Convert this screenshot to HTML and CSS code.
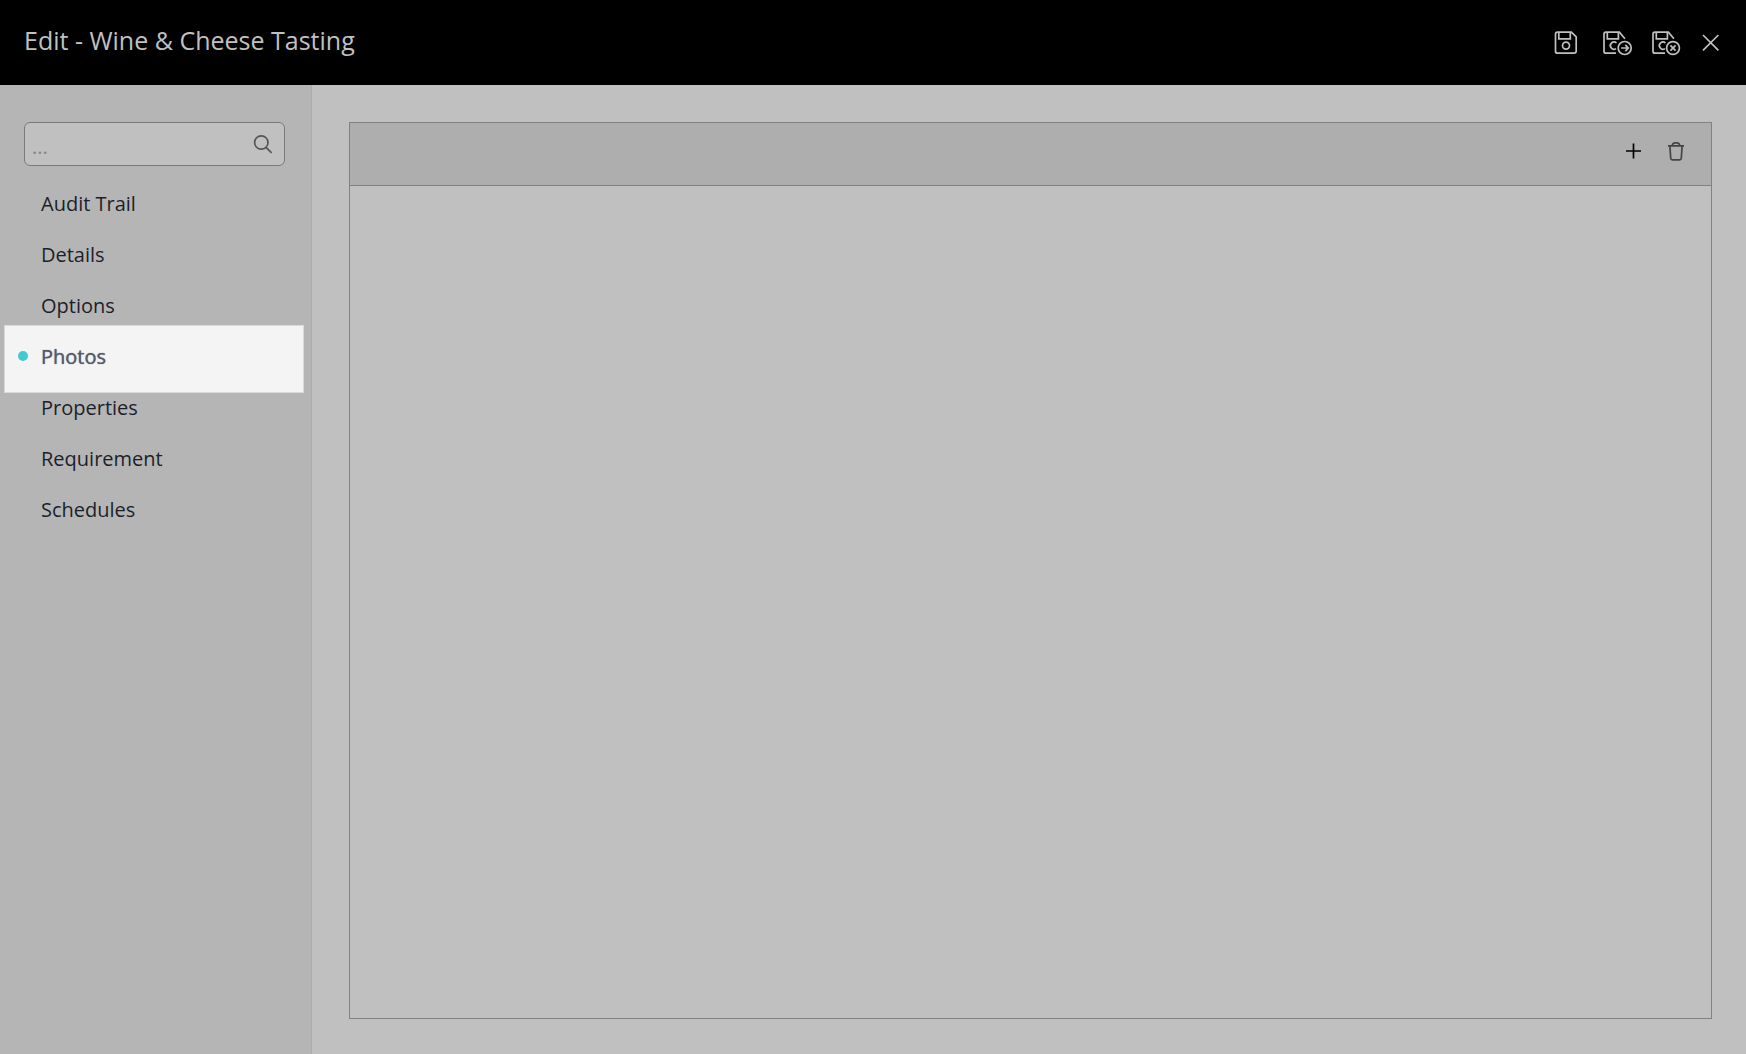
FILE: index.html
```html
<!DOCTYPE html>
<html lang="en">
<head>
<meta charset="utf-8">
<title>Edit - Wine &amp; Cheese Tasting</title>
<link rel="stylesheet" href="styles.css">
</head>
<body>
<header class="topbar">
  <h1 class="title">Edit - Wine &amp; Cheese Tasting</h1>
  <div class="actions">
    <button class="icon-btn" type="button" aria-label="Save">
      <svg width="30" height="26" viewBox="0 0 30 26"><path d="M3.5 2.2H17.4L22.2 6.8V21Q22.2 23.2 20 23.2H3.5Q1.5 23.2 1.5 21.2V4.2Q1.5 2.2 3.5 2.2Z"/><path d="M4.8 2.4V8.8H16.3V2.4"/><circle cx="12" cy="15.6" r="3.5"/></svg>
    </button>
    <button class="icon-btn" type="button" aria-label="Save and continue">
      <svg width="30" height="26" viewBox="0 0 30 26"><path d="M13 23.2H3Q1 23.2 1 21.2V4.2Q1 2.2 3 2.2H16.4L21.9 8.8"/><path d="M4.3 2.4V8.8H15.4V2.4"/><path d="M13.5 13A3.6 3.6 0 1 0 13 18.6"/><circle cx="21.7" cy="18" r="6.5"/><path d="M18.1 18H25.1M22.3 14.8L25.3 18L22.3 21.2"/></svg>
    </button>
    <button class="icon-btn" type="button" aria-label="Save and close">
      <svg width="30" height="26" viewBox="0 0 30 26"><path d="M13 23.2H3Q1 23.2 1 21.2V4.2Q1 2.2 3 2.2H16.4L21.9 8.8"/><path d="M4.3 2.4V8.8H15.4V2.4"/><path d="M13.5 13A3.6 3.6 0 1 0 13 18.6"/><circle cx="21" cy="18" r="6.4"/><path d="M18.4 15.4L23.6 20.6M23.6 15.4L18.4 20.6"/></svg>
    </button>
    <button class="icon-btn" type="button" aria-label="Close">
      <svg width="20" height="26" viewBox="0 0 20 26"><path d="M2 5L17.4 20.4M17.4 5L2 20.4"/></svg>
    </button>
  </div>
</header>
<div class="layout">
  <aside class="sidebar">
    <form class="search">
      <input class="search-input" type="search" placeholder="..." aria-label="Search sections">
      <button class="search-btn" type="button" aria-label="Search">
        <svg width="20" height="20" viewBox="0 0 20 20"><circle cx="8.3" cy="8.5" r="6.7"/><path d="M13 13.3L18.6 18.8"/></svg>
      </button>
    </form>
    <nav class="nav" aria-label="Sections">
      <a class="nav-link" href="#audit">Audit Trail</a>
      <a class="nav-link" href="#details">Details</a>
      <a class="nav-link" href="#options">Options</a>
      <a class="nav-link nav-link-active" href="#photos" aria-current="page">Photos</a>
      <a class="nav-link" href="#properties">Properties</a>
      <a class="nav-link" href="#requirement">Requirement</a>
      <a class="nav-link" href="#schedules">Schedules</a>
    </nav>
  </aside>
  <main class="content">
    <section class="panel" aria-label="Photos">
      <div class="toolbar">
        <button class="icon-btn add" type="button" aria-label="Add">
          <svg width="20" height="20" viewBox="0 0 20 20"><path d="M9.5 2.5V17.5M2 10H17"/></svg>
        </button>
        <button class="icon-btn delete" type="button" aria-label="Delete">
          <svg width="20" height="20" viewBox="0 0 20 20"><path d="M2 4.8H18M6.2 4.6Q6.6 1.8 9 1.8H11Q13.4 1.8 13.8 4.6M3.9 5L4.7 17.2Q4.8 18.8 6.2 18.8H13.8Q15.2 18.8 15.3 17.2L16.1 5"/></svg>
        </button>
      </div>
    </section>
  </main>
</div>
</body>
</html>
```
FILE: styles.css
```css
* { box-sizing: border-box; }

body {
  margin: 0;
  min-height: 100vh;
  display: flex;
  flex-direction: column;
  background: #c0c0c0;
  color: #1c1f2b;
  font-family: "Open Sans", "Noto Sans", sans-serif;
  font-size: 20px;
}

svg {
  display: block;
  fill: none;
  stroke: currentColor;
  stroke-width: 1.7;
}

.topbar {
  display: flex;
  align-items: center;
  justify-content: space-between;
  height: 85px;
  padding: 0 25px 0 24px;
  background: #000;
  color: #c0c0c0;
}

.title {
  margin: 0;
  padding-bottom: 5px;
  font-size: 25px;
  font-weight: 400;
  line-height: 34px;
}

.actions { display: flex; gap: 19px; }

.icon-btn,
.search-btn {
  padding: 0;
  border: 0;
  background: none;
  color: inherit;
  cursor: pointer;
}

.layout { display: flex; flex: 1; }

.sidebar {
  flex: none;
  width: 312px;
  padding-top: 37px;
  border-right: 1px solid #adadad;
  background: #b5b5b5;
}

.search {
  display: flex;
  align-items: center;
  height: 44px;
  margin: 0 26px 0 24px;
  padding: 0 11px 0 7px;
  border: 1px solid #7a7a7a;
  border-radius: 6px;
  background: #c0c0c0;
}

.search-input {
  flex: 1;
  min-width: 0;
  height: 42px;
  padding: 4px 0 0;
  border: 0;
  outline: 0;
  background: none;
  color: inherit;
  font: inherit;
}

.search-input::placeholder { color: #858585; }

.search-btn { color: #555; }

.nav { padding-top: 12px; }

.nav-link {
  display: block;
  padding: 12px 0 12px 41px;
  color: inherit;
  line-height: 27px;
  text-decoration: none;
}

.nav-link-active {
  position: relative;
  z-index: 0;
  color: #555a6c;
  text-shadow: 0 0 1px #555a6c;
}

/* raised highlight that overlaps the neighbouring rows */
.nav-link-active::before {
  content: "";
  position: absolute;
  z-index: -1;
  inset: -6px 7px -11px 4px;
  border: 1px solid #dadada;
  background: #f4f4f4;
}

.nav-link-active::after {
  content: "";
  position: absolute;
  top: 20px;
  left: 18px;
  width: 10px;
  height: 10px;
  border-radius: 50%;
  background: #45c8d2;
}

.content {
  display: flex;
  flex: 1;
  padding: 37px 34px 35px 37px;
}

.panel { flex: 1; border: 1px solid #828282; }

.toolbar {
  display: flex;
  align-items: center;
  justify-content: flex-end;
  gap: 22px;
  height: 63px;
  padding: 0 25px 6px 0;
  border-bottom: 1px solid #828282;
  background: #aeaeae;
}

.add { color: #000; }
.delete { color: #444; }
```
